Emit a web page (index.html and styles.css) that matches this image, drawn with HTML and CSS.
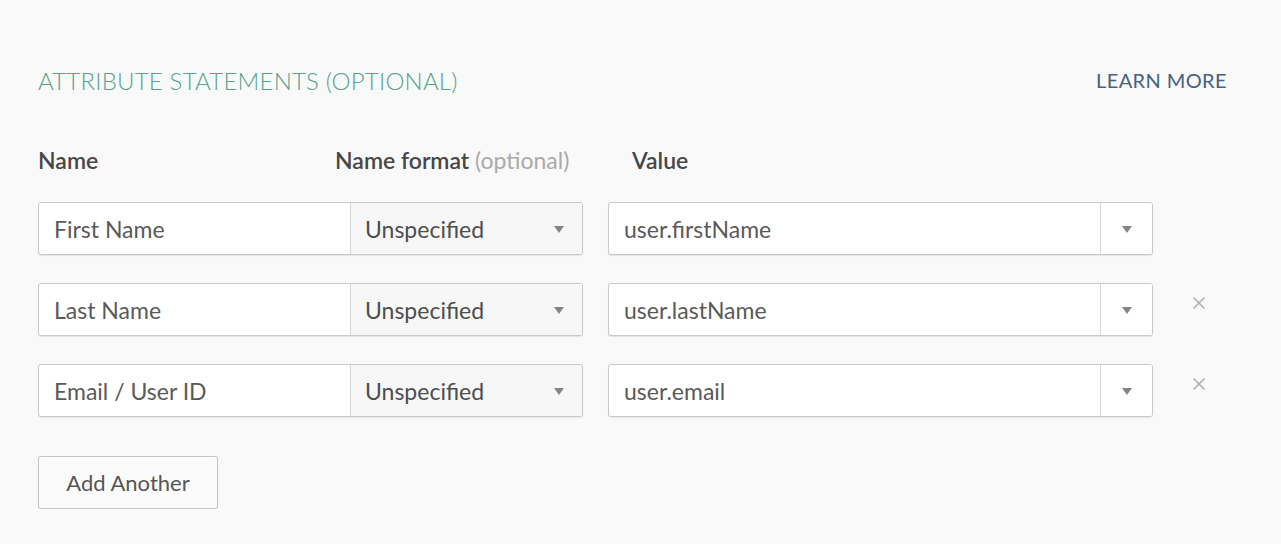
FILE: index.html
```html
<!DOCTYPE html>
<html lang="en">
  <head>
    <meta charset="UTF-8" />
    <meta name="viewport" content="width=device-width, initial-scale=1.0" />
    <title>Attribute Statements</title>
    <link rel="stylesheet" href="styles.css">
  </head>

  <body>
    <div class="section">
      <header class="section-head">
        <h2 class="section-title">ATTRIBUTE STATEMENTS (OPTIONAL)</h2>
        <a class="learn-more" href="#">LEARN MORE</a>
      </header>

      <div class="col-labels">
        <span class="label label-name">Name</span>
        <span class="label label-format">Name format <em>(optional)</em></span>
        <span class="label label-value">Value</span>
      </div>

      <div class="rows">
        <div class="attr-row">
          <div class="name-group">
            <div class="text-input">First Name</div>
            <div class="select">
              <span>Unspecified</span>
              <span class="caret"></span>
            </div>
          </div>
          <div class="value-group">
            <div class="value-input">user.firstName</div>
            <div class="value-btn"><span class="caret"></span></div>
          </div>
          <div class="remove"></div>
        </div>

        <div class="attr-row">
          <div class="name-group">
            <div class="text-input">Last Name</div>
            <div class="select">
              <span>Unspecified</span>
              <span class="caret"></span>
            </div>
          </div>
          <div class="value-group">
            <div class="value-input">user.lastName</div>
            <div class="value-btn"><span class="caret"></span></div>
          </div>
          <div class="remove">
            <svg width="14" height="14" viewBox="0 0 14 14"><path d="M1.5 1.5 L12.5 12.5 M12.5 1.5 L1.5 12.5" stroke="#b0b0b0" stroke-width="1.6" fill="none"/></svg>
          </div>
        </div>

        <div class="attr-row">
          <div class="name-group">
            <div class="text-input">Email / User ID</div>
            <div class="select">
              <span>Unspecified</span>
              <span class="caret"></span>
            </div>
          </div>
          <div class="value-group">
            <div class="value-input">user.email</div>
            <div class="value-btn"><span class="caret"></span></div>
          </div>
          <div class="remove">
            <svg width="14" height="14" viewBox="0 0 14 14"><path d="M1.5 1.5 L12.5 12.5 M12.5 1.5 L1.5 12.5" stroke="#b0b0b0" stroke-width="1.6" fill="none"/></svg>
          </div>
        </div>
      </div>

      <button class="add-btn">Add Another</button>
    </div>
  </body>
</html>
```

FILE: styles.css
```css
body {
  margin: 0;
  background-color: #f9f9f9;
  font-family: Lato, "Open Sans", sans-serif;
  color: #5a5a5a;
}

.section {
  padding: 64px 54px 0 38px;
}

.section-head {
  display: flex;
  justify-content: space-between;
  align-items: center;
  height: 32px;
}

.section-title {
  margin: 0;
  font-size: 24px;
  font-weight: 300;
  color: #55a38c;
  letter-spacing: 0.2px;
}

.learn-more {
  font-size: 20px;
  color: #46627f;
  text-decoration: none;
  letter-spacing: 0.4px;
}

.col-labels {
  display: flex;
  margin-top: 46px;
  height: 36px;
  align-items: center;
}

.label {
  font-size: 23px;
  font-weight: 600;
  color: #474747;
}

.label em {
  font-style: normal;
  font-weight: 400;
  color: #aaa;
}

.label-name {
  width: 297px;
}

.label-format {
  width: 297px;
}

.rows {
  margin-top: 24px;
  display: flex;
  flex-direction: column;
  gap: 28px;
}

.attr-row {
  display: flex;
  align-items: center;
}

.name-group,
.value-group {
  display: flex;
  flex-shrink: 0;
  width: 545px;
  height: 53px;
  box-sizing: border-box;
  border: 1px solid #c9c9c9;
  border-radius: 3px;
  background-color: #fff;
  box-shadow: 0 1px 1px rgba(0, 0, 0, 0.08);
  overflow: hidden;
  font-size: 23px;
}

.value-group {
  margin-left: 25px;
}

.text-input {
  width: 311px;
  padding-left: 15px;
  display: flex;
  align-items: center;
  box-sizing: border-box;
}

.select {
  flex: 1;
  display: flex;
  align-items: center;
  justify-content: space-between;
  padding: 0 18px 0 14px;
  background-color: #f7f7f7;
  border-left: 1px solid #d6d6d6;
  color: #4e4e4e;
}

.value-input {
  flex: 1;
  display: flex;
  align-items: center;
  padding-left: 15px;
}

.value-btn {
  width: 51px;
  display: flex;
  align-items: center;
  justify-content: center;
  border-left: 1px solid #d6d6d6;
  background-color: #fff;
}

.caret {
  width: 0;
  height: 0;
  border-left: 5px solid transparent;
  border-right: 5px solid transparent;
  border-top: 7px solid #858585;
  margin-top: 2px;
}

.remove {
  flex-shrink: 0;
  width: 92px;
  display: flex;
  justify-content: center;
  margin-top: -14px;
}

.add-btn {
  margin-top: 39px;
  width: 180px;
  height: 53px;
  border: 1px solid #c4c4c4;
  border-radius: 3px;
  background-color: #fbfbfb;
  box-shadow: 0 1px 1px rgba(0, 0, 0, 0.08);
  font-family: Lato, "Open Sans", sans-serif;
  font-size: 22px;
  color: #555;
  cursor: pointer;
}
```
